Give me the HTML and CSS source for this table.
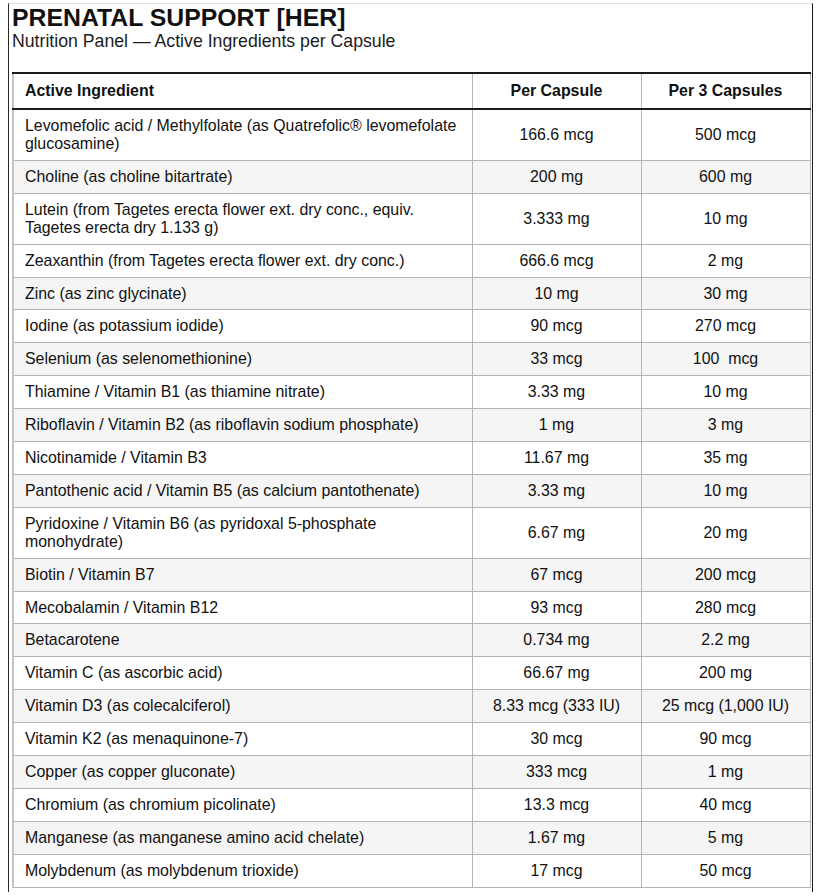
FILE: index.html
```html
<!DOCTYPE html>
<html lang="en">
<head>
<meta charset="utf-8">
<title>Prenatal Support [HER] — Nutrition Panel</title>
<link rel="stylesheet" href="styles.css">
</head>
<body>
<div class="frame">
  <h1 class="title">PRENATAL SUPPORT [HER]</h1>
  <p class="subtitle">Nutrition Panel — Active Ingredients per Capsule</p>
  <table class="panel">
    <colgroup>
      <col class="c-name">
      <col class="c-one">
      <col class="c-three">
    </colgroup>
    <thead>
      <tr>
        <th class="name">Active Ingredient</th>
        <th>Per Capsule</th>
        <th>Per 3 Capsules</th>
      </tr>
    </thead>
    <tbody>
      <tr><td class="name">Levomefolic acid / Methylfolate (as Quatrefolic® levomefolate glucosamine)</td><td>166.6 mcg</td><td>500 mcg</td></tr>
      <tr class="alt"><td class="name">Choline (as choline bitartrate)</td><td>200 mg</td><td>600 mg</td></tr>
      <tr><td class="name">Lutein (from Tagetes erecta flower ext. dry conc., equiv. Tagetes erecta dry 1.133 g)</td><td>3.333 mg</td><td>10 mg</td></tr>
      <tr><td class="name">Zeaxanthin (from Tagetes erecta flower ext. dry conc.)</td><td>666.6 mcg</td><td>2 mg</td></tr>
      <tr class="alt"><td class="name">Zinc (as zinc glycinate)</td><td>10 mg</td><td>30 mg</td></tr>
      <tr><td class="name">Iodine (as potassium iodide)</td><td>90 mcg</td><td>270 mcg</td></tr>
      <tr class="alt"><td class="name">Selenium (as selenomethionine)</td><td>33 mcg</td><td>100&nbsp; mcg</td></tr>
      <tr><td class="name">Thiamine / Vitamin B1 (as thiamine nitrate)</td><td>3.33 mg</td><td>10 mg</td></tr>
      <tr class="alt"><td class="name">Riboflavin / Vitamin B2 (as riboflavin sodium phosphate)</td><td>1 mg</td><td>3 mg</td></tr>
      <tr><td class="name">Nicotinamide / Vitamin B3</td><td>11.67 mg</td><td>35 mg</td></tr>
      <tr class="alt"><td class="name">Pantothenic acid / Vitamin B5 (as calcium pantothenate)</td><td>3.33 mg</td><td>10 mg</td></tr>
      <tr><td class="name">Pyridoxine / Vitamin B6 (as pyridoxal 5-phosphate monohydrate)</td><td>6.67 mg</td><td>20 mg</td></tr>
      <tr class="alt"><td class="name">Biotin / Vitamin B7</td><td>67 mcg</td><td>200 mcg</td></tr>
      <tr><td class="name">Mecobalamin / Vitamin B12</td><td>93 mcg</td><td>280 mcg</td></tr>
      <tr class="alt"><td class="name">Betacarotene</td><td>0.734 mg</td><td>2.2 mg</td></tr>
      <tr><td class="name">Vitamin C (as ascorbic acid)</td><td>66.67 mg</td><td>200 mg</td></tr>
      <tr class="alt"><td class="name">Vitamin D3 (as colecalciferol)</td><td>8.33 mcg (333 IU)</td><td>25 mcg (1,000 IU)</td></tr>
      <tr><td class="name">Vitamin K2 (as menaquinone-7)</td><td>30 mcg</td><td>90 mcg</td></tr>
      <tr class="alt"><td class="name">Copper (as copper gluconate)</td><td>333 mcg</td><td>1 mg</td></tr>
      <tr><td class="name">Chromium (as chromium picolinate)</td><td>13.3 mcg</td><td>40 mcg</td></tr>
      <tr class="alt"><td class="name">Manganese (as manganese amino acid chelate)</td><td>1.67 mg</td><td>5 mg</td></tr>
      <tr><td class="name">Molybdenum (as molybdenum trioxide)</td><td>17 mcg</td><td>50 mcg</td></tr>
    </tbody>
  </table>
</div>
</body>
</html>
```
FILE: styles.css
```css
html, body {
  margin: 0;
  padding: 0;
  background: #ffffff;
}

body {
  font-family: "Liberation Sans", Arial, sans-serif;
  color: #111111;
}

.frame {
  box-sizing: border-box;
  width: 805px;
  height: 889px;
  margin: 3px 0 0 8px;
  padding: 1px 3px 0 3px;
  border-top: 1px solid #e2e2dc;
  border-left: 1px solid #2a2a2a;
  border-right: 1px solid #1a1a1a;
}

.title {
  margin: 0;
  font-size: 24.8px;
  line-height: 26px;
  font-weight: 700;
  color: #111111;
}

.subtitle {
  margin: 0;
  font-size: 17.7px;
  line-height: 20px;
  color: #1c1c1c;
}

.panel {
  margin-top: 21px;
  width: 797px;
  border-collapse: collapse;
  table-layout: fixed;
  font-size: 15.9px;
  line-height: 18px;
  border: 1px solid #bdbdbd;
  border-left: 2px solid #c4c4c4;
}

.c-name { width: 459px; }
.c-one { width: 169px; }
.c-three { width: 169px; }

.panel th,
.panel td {
  border: 1px solid #b4b4b4;
  text-align: center;
  vertical-align: middle;
}

.panel th {
  padding: 8px 6px 8px 6px;
  font-weight: 700;
  border-top: 2px solid #1a1a1a;
  border-bottom: 2px solid #1a1a1a;
  background: #ffffff;
}

.panel td {
  padding: 7px 6px 6.9px 6px;
}

.panel .name {
  text-align: left;
  padding-left: 11px;
  padding-right: 5px;
}

.panel tr.alt td {
  background: #f5f5f5;
}
```
